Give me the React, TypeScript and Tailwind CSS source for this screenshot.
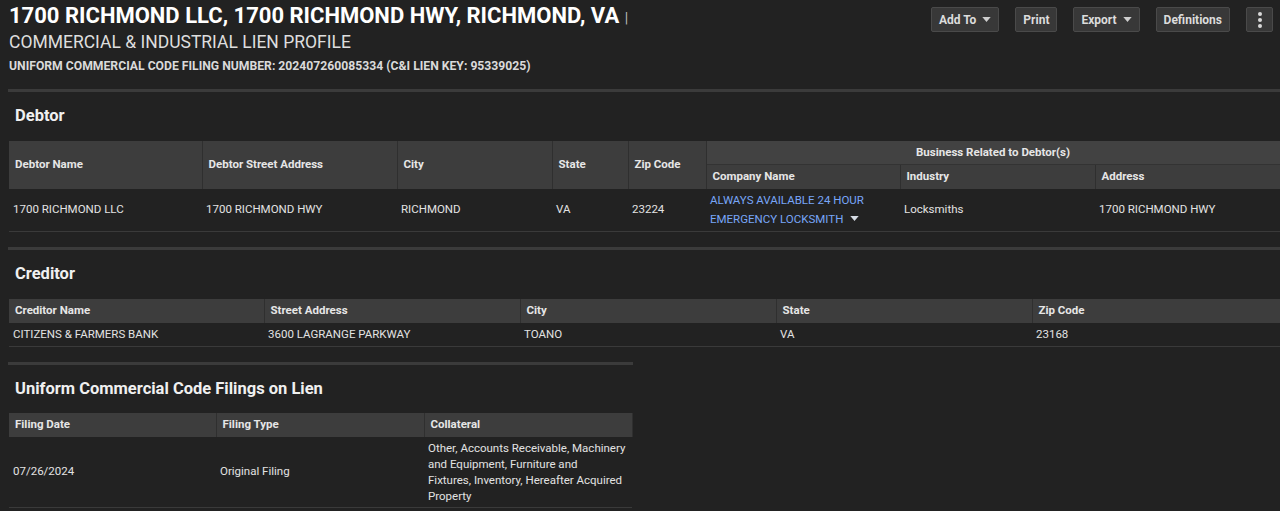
const font = { fontFamily: "Roboto, 'Liberation Sans', sans-serif" };

function Caret({ className = "" }: { className?: string }) {
  return (
    <svg viewBox="0 0 10 6" className={"inline-block h-[5px] w-[9px] " + className} fill="currentColor">
      <path d="M0 0h10L5 6z" />
    </svg>
  );
}

function ToolButton({ label, caret }: { label: string; caret?: boolean }) {
  return (
    <button className="flex h-[25px] items-center gap-[6px] rounded-[2px] border border-[#4a4a4a] bg-[#383838] px-[7px] text-[12px] font-bold text-[#dcdcdc]">
      {label}
      {caret && <Caret className="text-[#cfcfcf]" />}
    </button>
  );
}

function Divider({ width }: { width?: string }) {
  return <div className={"ml-[8px] h-[3px] bg-[#3b3b3b] " + (width ?? "")} />;
}

function SectionTitle({ children, tight }: { children: React.ReactNode; tight?: boolean }) {
  return (
    <h2
      className={
        "ml-[15px] mt-[14px] text-[16.5px] font-bold leading-[20px] text-[#f0f0f0] " +
        (tight ? "mb-[14px]" : "mb-[15px]")
      }
    >
      {children}
    </h2>
  );
}

const thBase = "border-r border-[#2f2f2f] bg-[#3d3d3d] px-[6px] align-middle text-[11.5px] font-bold text-[#e6e6e6]";
const th = thBase + " text-left";
const tdBase = "px-[4px] align-middle text-[11.5px]";
const td = tdBase + " text-[#e2e2e2]";

export default function App() {
  const creditorCols = ["Creditor Name", "Street Address", "City", "State", "Zip Code"];
  const creditorRow = ["CITIZENS & FARMERS BANK", "3600 LAGRANGE PARKWAY", "TOANO", "VA", "23168"];

  return (
    <div className="min-h-[511px] w-[1280px] overflow-hidden bg-[#222222] text-[#e2e2e2]" style={font}>
      {/* page header */}
      <div className="flex items-start justify-between pl-[9px] pr-[7px]">
        <div className="pt-[3px]">
          <h1 className="text-[22px] font-bold leading-[26px] text-white">
            1700 RICHMOND LLC, 1700 RICHMOND HWY, RICHMOND, VA{" "}
            <span className="text-[14px] font-normal text-[#bbbbbb]">|</span>
          </h1>
          <div className="text-[17.5px] leading-[22px] text-[#dedede]">
            COMMERCIAL &amp; INDUSTRIAL LIEN PROFILE
          </div>
          <div className="mt-[5px] text-[12.2px] font-bold leading-[16px] text-[#dadada]">
            UNIFORM COMMERCIAL CODE FILING NUMBER: 202407260085334 (C&amp;I LIEN KEY: 95339025)
          </div>
        </div>
        <div className="flex gap-[16px] pt-[7px]">
          <ToolButton label="Add To" caret />
          <ToolButton label="Print" />
          <ToolButton label="Export" caret />
          <ToolButton label="Definitions" />
          <button className="flex h-[25px] w-[27px] flex-col items-center justify-center gap-[2px] rounded-[2px] border border-[#4a4a4a] bg-[#383838]">
            <span className="h-[4px] w-[4px] rounded-full bg-[#d8d8d8]" />
            <span className="h-[4px] w-[4px] rounded-full bg-[#d8d8d8]" />
            <span className="h-[4px] w-[4px] rounded-full bg-[#d8d8d8]" />
          </button>
        </div>
      </div>

      <div className="mt-[15px]">
        <Divider />
        <SectionTitle>Debtor</SectionTitle>
        <table className="ml-[9px] w-[1271px] table-fixed border-collapse">
          <colgroup>
            <col className="w-[193px]" />
            <col className="w-[195px]" />
            <col className="w-[155px]" />
            <col className="w-[76px]" />
            <col className="w-[78px]" />
            <col className="w-[194px]" />
            <col className="w-[195px]" />
            <col className="w-[185px]" />
          </colgroup>
          <thead>
            <tr className="h-[23px]">
              <th rowSpan={2} className={th}>Debtor Name</th>
              <th rowSpan={2} className={th}>Debtor Street Address</th>
              <th rowSpan={2} className={th}>City</th>
              <th rowSpan={2} className={th}>State</th>
              <th rowSpan={2} className={th}>Zip Code</th>
              <th colSpan={3} className={thBase + " border-b border-b-[#333333] bg-[#424242] text-center"}>
                Business Related to Debtor(s)
              </th>
            </tr>
            <tr className="h-[25px]">
              <th className={th}>Company Name</th>
              <th className={th}>Industry</th>
              <th className={th}>Address</th>
            </tr>
          </thead>
          <tbody>
            <tr className="h-[42px] border-b border-[#3a3a3a]">
              <td className={td}>1700 RICHMOND LLC</td>
              <td className={td}>1700 RICHMOND HWY</td>
              <td className={td}>RICHMOND</td>
              <td className={td}>VA</td>
              <td className={td}>23224</td>
              <td className={tdBase + " leading-[19px] text-[#78a6f8]"}>
                ALWAYS AVAILABLE 24 HOUR
                <br />
                EMERGENCY LOCKSMITH <Caret className="ml-[4px] mb-[2px] text-[#d6dbe4]" />
              </td>
              <td className={td}>Locksmiths</td>
              <td className={td}>1700 RICHMOND HWY</td>
            </tr>
          </tbody>
        </table>
      </div>

      <div className="mt-[15px]">
        <Divider />
        <SectionTitle>Creditor</SectionTitle>
        <table className="ml-[9px] w-[1280px] table-fixed border-collapse">
          <colgroup>
            <col className="w-[255px]" />
            <col className="w-[256px]" />
            <col className="w-[256px]" />
            <col className="w-[256px]" />
            <col className="w-[257px]" />
          </colgroup>
          <thead>
            <tr className="h-[24px]">
              {creditorCols.map((c) => (
                <th key={c} className={th}>{c}</th>
              ))}
            </tr>
          </thead>
          <tbody>
            <tr className="h-[24px] border-b border-[#3a3a3a]">
              {creditorRow.map((c, i) => (
                <td key={i} className={td}>{c}</td>
              ))}
            </tr>
          </tbody>
        </table>
      </div>

      <div className="mt-[15px]">
        <Divider width="w-[625px]" />
        <SectionTitle tight>Uniform Commercial Code Filings on Lien</SectionTitle>
        <table className="ml-[9px] w-[623px] table-fixed border-collapse">
          <colgroup>
            <col className="w-[207px]" />
            <col className="w-[208px]" />
            <col className="w-[208px]" />
          </colgroup>
          <thead>
            <tr className="h-[24px]">
              <th className={th}>Filing Date</th>
              <th className={th}>Filing Type</th>
              <th className={th}>Collateral</th>
            </tr>
          </thead>
          <tbody>
            <tr className="h-[70px] border-b border-[#3a3a3a]">
              <td className={td}>07/26/2024</td>
              <td className={td}>Original Filing</td>
              <td className={td + " leading-[16px]"}>
                Other, Accounts Receivable, Machinery
                <br />
                and Equipment, Furniture and
                <br />
                Fixtures, Inventory, Hereafter Acquired
                <br />
                Property
              </td>
            </tr>
          </tbody>
        </table>
      </div>
    </div>
  );
}
